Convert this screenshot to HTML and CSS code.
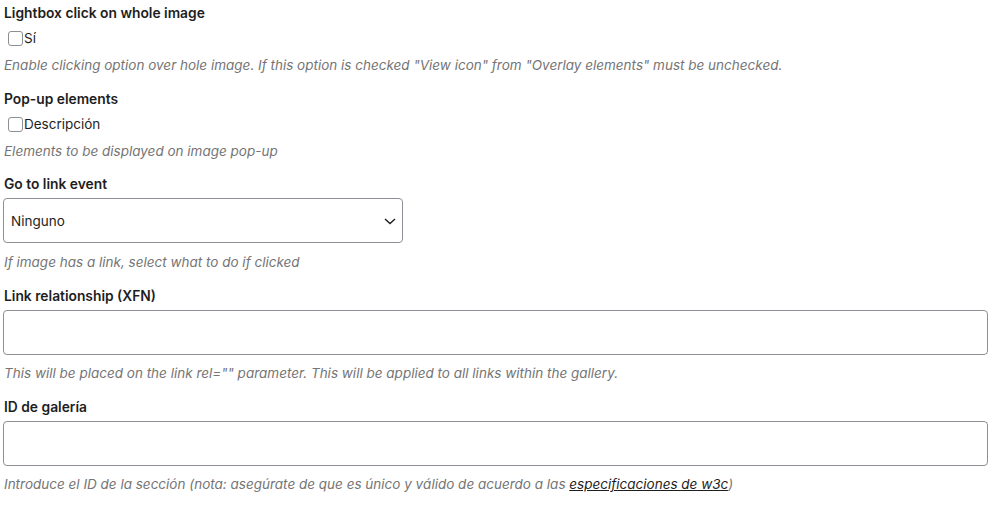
FILE: index.html
```html
<!DOCTYPE html>
<html lang="es">
<head>
<meta charset="utf-8">
<title>Gallery settings</title>
<link rel="stylesheet" href="styles.css">
</head>
<body>
<div class="panel">
  <div class="field">
    <div class="label">Lightbox click on whole image</div>
    <label class="check"><span class="box"></span><span>Sí</span></label>
    <p class="help">Enable clicking option over hole image. If this option is checked "View icon" from "Overlay elements" must be unchecked.</p>
  </div>
  <div class="field field-tight">
    <div class="label">Pop-up elements</div>
    <label class="check"><span class="box"></span><span>Descripción</span></label>
    <p class="help">Elements to be displayed on image pop-up</p>
  </div>
  <div class="field">
    <div class="label label-ctl">Go to link event</div>
    <div class="select">
      <span>Ninguno</span>
      <svg class="chev" width="14" height="10" viewBox="0 0 14 10"><path d="M2 3l5 4.5L12 3" fill="none" stroke="#1e1e1e" stroke-width="1.4"/></svg>
    </div>
    <p class="help help-sel">If image has a link, select what to do if clicked</p>
  </div>
  <div class="field">
    <div class="label label-ctl">Link relationship (XFN)</div>
    <div class="input"></div>
    <p class="help help-ctl">This will be placed on the link rel="" parameter. This will be applied to all links within the gallery.</p>
  </div>
  <div class="field">
    <div class="label label-ctl">ID de galería</div>
    <div class="input"></div>
    <p class="help help-ctl">Introduce el ID de la sección (nota: asegúrate de que es único y válido de acuerdo a las <a href="#">especificaciones de w3c</a>)</p>
  </div>
</div>
</body>
</html>
```
FILE: styles.css
```css
html, body {
  margin: 0;
  padding: 0;
  background: #ffffff;
}
body {
  font-family: Inter, "Liberation Sans", sans-serif;
  font-size: 13.5px;
  color: #1e1e1e;
}
.panel {
  padding: 4px 4px 0 3px;
}
.field {
  margin-bottom: 16px;
}
.field-tight {
  margin-bottom: 15px;
}
.label {
  font-weight: 600;
  font-size: 13.8px;
  line-height: 18px;
  padding-left: 1px;
}
.label-ctl {
  margin-bottom: 5px;
}
.check {
  display: flex;
  align-items: center;
  height: 20px;
  margin-top: 6px;
  padding-left: 5px;
  line-height: 20px;
}
.box {
  width: 15px;
  height: 15px;
  border: 1px solid #8c8f94;
  border-radius: 3px;
  box-sizing: border-box;
  margin-right: 1px;
  background: #fff;
}
.help {
  margin: 8px 0 0;
  padding-left: 1px;
  font-style: italic;
  color: #757575;
  line-height: 18px;
}
.help-sel {
  margin-top: 10px;
}
.help-ctl {
  margin-top: 9px;
}
.help a {
  color: #1e1e1e;
  text-decoration: underline;
}
.select {
  width: 400px;
  height: 45px;
  box-sizing: border-box;
  border: 1px solid #8c8f94;
  border-radius: 4px;
  display: flex;
  align-items: center;
  justify-content: space-between;
  padding: 0 5px 0 7px;
}
.input {
  height: 45px;
  box-sizing: border-box;
  border: 1px solid #8c8f94;
  border-radius: 4px;
}
```
